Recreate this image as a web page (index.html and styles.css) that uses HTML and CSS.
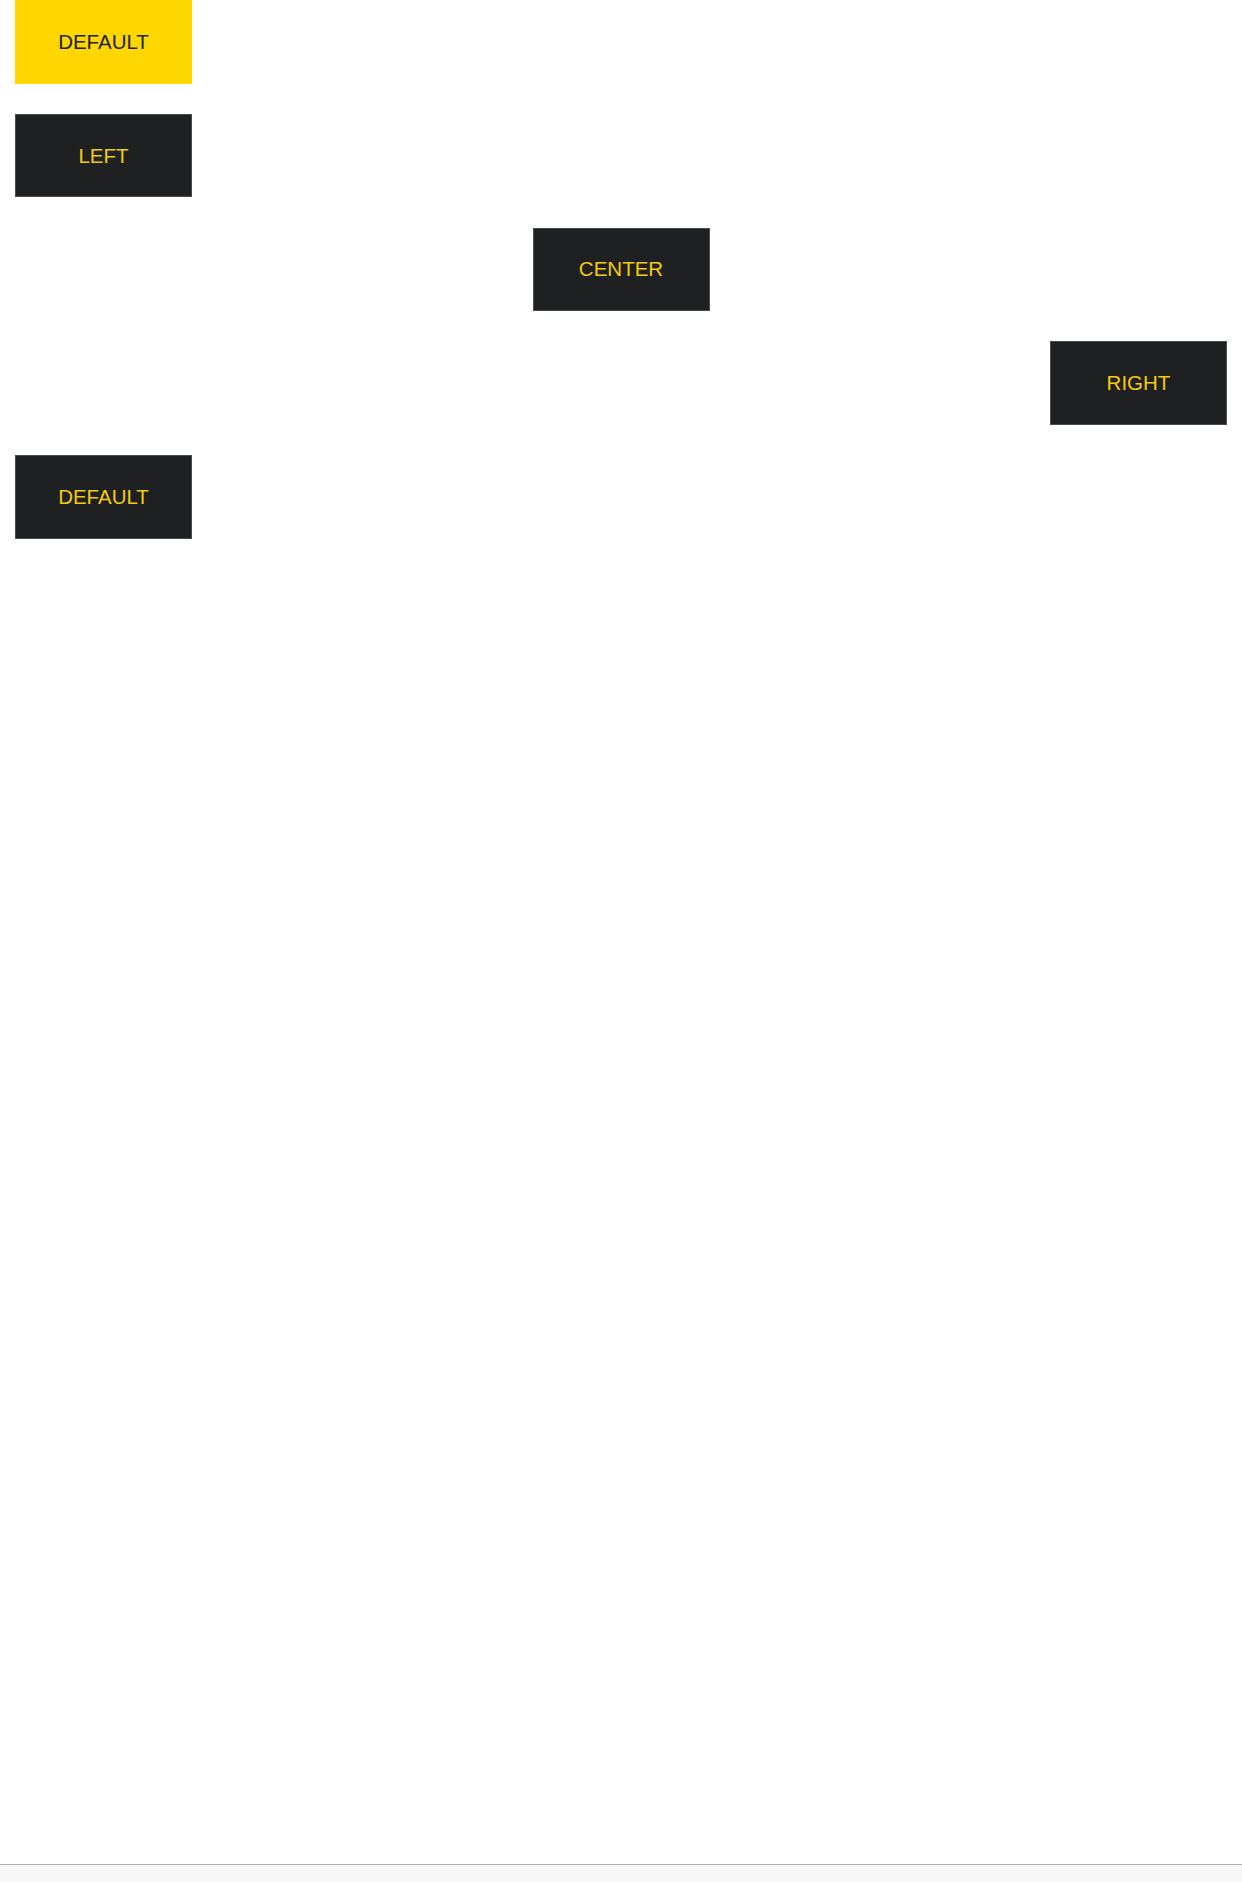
FILE: index.html
```html
<!DOCTYPE html>
<html>
<head>
<meta charset="utf-8">
<link rel="stylesheet" href="styles.css">
</head>
<body>
<div class="page">
  <div class="row"><div class="btn btn-yellow">DEFAULT</div></div>
  <div class="row"><div class="btn btn-dark">LEFT</div></div>
  <div class="row row-center"><div class="btn btn-dark">CENTER</div></div>
  <div class="row row-right"><div class="btn btn-dark">RIGHT</div></div>
  <div class="row"><div class="btn btn-dark">DEFAULT</div></div>
</div>
<div class="footer"></div>
</body>
</html>
```
FILE: styles.css
```css
html, body {
  margin: 0;
  padding: 0;
  height: 100%;
  background: #ffffff;
}
body {
  display: flex;
  flex-direction: column;
  font-family: "Liberation Sans", Arial, sans-serif;
}
.page {
  flex: 1;
  padding: 0 15px;
  display: flex;
  flex-direction: column;
  gap: 30.25px;
}
.row {
  display: flex;
  justify-content: flex-start;
}
.row-center { justify-content: center; }
.row-right { justify-content: flex-end; }
.btn {
  width: 177px;
  height: 83.5px;
  box-sizing: border-box;
  display: flex;
  align-items: center;
  justify-content: center;
  font-size: 20.5px;
  letter-spacing: 0;
}
.btn-yellow {
  background: #ffd700;
  color: #222222;
}
.btn-dark {
  background: #1f2022;
  color: #f2cc0c;
  border: 1px solid #4a4b4d;
}
.footer {
  height: 17px;
  border-top: 1px solid #b3b3b3;
  background: #f6f6f6;
}
```
